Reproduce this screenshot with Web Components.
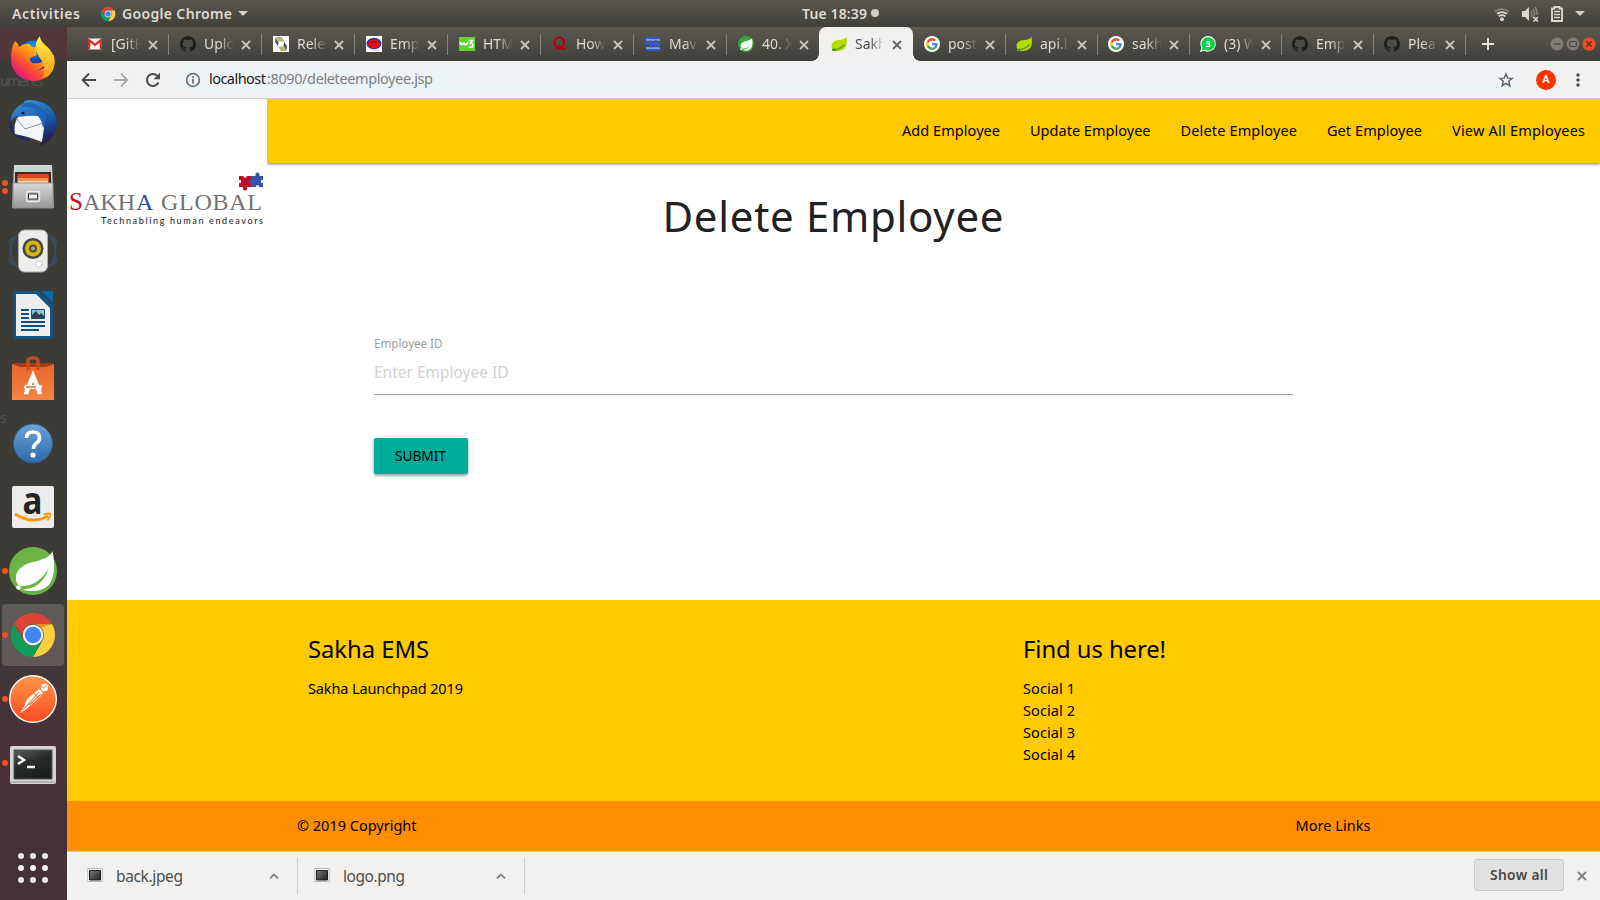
<!DOCTYPE html>
<html lang="en">
<head>
<meta charset="utf-8">
<title>Sakha EMS</title>
<style>
html,body{margin:0;height:100%;overflow:hidden;background:#3c3b36}
body{font-family:"Noto Sans","Open Sans",sans-serif;color:#000}
</style>
</head>
<body>
<desk-top></desk-top>
<script>
const ICONS = {
chrome:['0 0 48 48','<path fill="#db4437" d="M24 13H43.05A22 22 0 0 0 4.95 13L14.5 29.5A11 11 0 0 1 24 13z"/><path fill="#ffcd40" d="M43.05 13H24A11 11 0 0 1 33.5 29.5L24 46A22 22 0 0 0 43.05 13z"/><path fill="#0f9d58" d="M24 46L33.5 29.5A11 11 0 0 1 14.5 29.5L4.95 13A22 22 0 0 0 24 46z"/><path fill="#a52714" opacity=".35" d="M24 13H43l-12 4zM5 13l9.500 16.500L13 22z"/><circle cx="24" cy="24" r="10.300" fill="#f1f1f1"/><circle cx="24" cy="24" r="8.200" fill="#4285f4"/>'],
gmail:['0 0 16 16','<path fill="#f2f2f2" d="M1 2.500h14v11H1z"/><path fill="#d93025" d="M1 3.500Q1 2.500 2 2.500L8 7.500 14 2.500Q15 2.500 15 3.500V13.500H12.800V6.600L8 10.300 3.200 6.600V13.500H1z"/>'],
github:['0 0 16 16','<path fill="#1f1f1e" d="M8 0C3.58 0 0 3.58 0 8c0 3.540 2.290 6.530 5.470 7.590.4.070.55-.17.55-.38 0-.19-.01-.82-.01-1.490-2.010.37-2.530-.49-2.690-.94-.09-.23-.48-.94-.82-1.130-.28-.15-.68-.52-.01-.53.63-.01 1.080.58 1.230.82.72 1.210 1.870.87 2.330.66.070-.52.28-.87.51-1.070-1.780-.2-3.640-.89-3.640-3.950 0-.87.31-1.590.82-2.150-.08-.2-.36-1.020.08-2.120 0 0 .67-.21 2.200.82.64-.18 1.320-.27 2-.27s1.360.09 2 .27c1.530-1.040 2.200-.82 2.200-.82.44 1.100.16 1.920.08 2.120.51.56.82 1.270.82 2.150 0 3.070-1.870 3.750-3.650 3.950.29.25.54.73.54 1.480 0 1.070-.01 1.930-.01 2.200 0 .21.15.46.55.38A8.010 8.010 0 0 0 16 8c0-4.420-3.580-8-8-8z"/>'],
hib:['0 0 16 16','<path fill="#fff" d="M0 0h16v16H0z"/><path fill="#b9ad72" d="M3 1h5.500l3 4.500H5.500zM5 10.500h5.500L13.500 15H8z"/><path fill="#4f5b63" d="M2.500 1.500L5.500 6 5 10.500 2 6zM11 5.500l3 4.500-.5 4.500L10.500 10z"/>'],
red:['0 0 16 16','<path fill="#fff" d="M0 0h16v16H0z"/><ellipse cx="8" cy="7.500" rx="7.500" ry="5.700" fill="#27379a"/><ellipse cx="8" cy="8" rx="6" ry="4.600" fill="#e80d12"/><path d="M5 6.500q3-2 6 .5" stroke="#8b0710" fill="none" stroke-width="1.200"/><path d="M4 14h9" stroke="#c9c9d0"/>'],
w3:['0 0 16 16','<path fill="#62d334" d="M0 1h16v14H0z"/><path d="M1.200 6q.5 2.600 2 2.500T5 6.500Q5.300 8.600 6.800 8.500T9 6M9.500 4.500H13.500L11.500 7.300Q14.200 7.500 14 9.700T9.600 11" fill="none" stroke="#fff" stroke-width="1.700"/>'],
quora:['0 0 16 16','<ellipse cx="7.300" cy="7" rx="4.700" ry="5.500" fill="none" stroke="#b30000" stroke-width="2.200"/><path d="M5.500 10q3-1.200 4.500 1.800t3.500 0" fill="none" stroke="#b30000" stroke-width="1.700"/>'],
mvn:['0 0 16 16','<path fill="#3458d8" d="M1 1h14v3H1zM1 12h14v3H1z"/><path fill="#ddd" d="M1 3.500h14v1H1zM1 11.500h14v1H1z"/><path stroke="#3458d8" stroke-width="1.400" fill="none" d="M1.500 10.500v-5l2 2.500 2-2.500v5M7 5.500v5l3-5v5M11.500 10.500v-5l3 5v-5"/>'],
springc:['0 0 48 48','<circle cx="24" cy="24" r="24" fill="#6bb344"/><path fill="#fff" d="M43.500 4C41 10 36 12 24 15 11 18 6 25 7 33q.6 4 4 6 18 1 29-18Q33 42 13 42.500 30 47 40 38 48 26 43.500 4z"/><circle cx="9.500" cy="40.500" r="2.200" fill="#fff"/>'],
springf:['0 0 48 48','<circle cx="24" cy="24" r="24" fill="#31a836"/><path fill="#fff" d="M42 7Q35 14 22 16 7 20 8 31q1 5 6 7 14 0 25-12-9 13-26 16 15 6 25-4 8-10 4-31z"/><circle cx="10" cy="40" r="3" fill="#fff"/>'],
leaf:['0 0 16 16','<path fill="#b4dc00" d="M15.500 1Q13 4 8 4 1 4.500.5 10q0 3 2 5 10 1 12.500-4.500 1.500-4 .5-9.500z"/><path d="M1 14Q9 14 13.500 8.500" fill="none" stroke="#5d9c1c" stroke-width="1.300"/><path fill="#5d9c1c" d="M1 13l3-1 1 3H1.500z"/>'],
google:['-5 -5 58 58','<circle cx="24" cy="24" r="29" fill="#fff"/><g transform="translate(3 3) scale(.875)"><path fill="#ea4335" d="M24 9.500c3.540 0 6.710 1.220 9.210 3.600l6.850-6.850C35.900 2.380 30.470 0 24 0 14.620 0 6.510 5.380 2.560 13.220l7.980 6.190C12.430 13.720 17.740 9.500 24 9.500z"/><path fill="#4285f4" d="M46.980 24.550c0-1.570-.15-3.090-.38-4.550H24v9.020h12.940c-.58 2.960-2.260 5.480-4.780 7.180l7.730 6c4.510-4.180 7.090-10.360 7.090-17.650z"/><path fill="#fbbc05" d="M10.530 28.590c-.48-1.450-.76-2.990-.76-4.590s.27-3.140.76-4.590l-7.980-6.190C.92 16.460 0 20.120 0 24c0 3.880.92 7.540 2.560 10.780l7.970-6.190z"/><path fill="#34a853" d="M24 48c6.480 0 11.930-2.130 15.890-5.810l-7.730-6c-2.150 1.450-4.920 2.300-8.160 2.300-6.260 0-11.570-4.220-13.470-9.910l-7.980 6.190C6.510 42.620 14.620 48 24 48z"/></g>'],
whats:['0 0 16 16','<path fill="#fff" d="M8.200 0A7.800 7.800 0 1 1 4.500 14.800L0 16 1.300 11.500A7.800 7.800 0 0 1 8.200 0z"/><path fill="#06d044" d="M8.200 1.200A6.700 6.700 0 1 1 4.700 13.600L1.600 14.400 2.500 11.400A6.700 6.700 0 0 1 8.200 1.200z"/><text x="8.200" y="11.300" text-anchor="middle" font-size="9" font-weight="700" fill="#fff">3</text>'],
x:['0 0 10 10','<path d="M1 1l8 8M9 1l-8 8" stroke="currentColor" stroke-width="1.800" fill="none"/>'],
plus:['0 0 12 12','<path d="M6 0v12M0 6h12" stroke="#e8e7e3" stroke-width="1.900"/>'],
min:['0 0 14 14','<circle cx="7" cy="7" r="6.500" fill="#7f7d76"/><path d="M3.500 7h7" stroke="#45443f" stroke-width="1.200"/>'],
max:['0 0 14 14','<circle cx="7" cy="7" r="6.500" fill="#7f7d76"/><path d="M3.700 4.600h6.600v4.800H3.700z" fill="none" stroke="#45443f"/>'],
cls:['0 0 14 14','<circle cx="7" cy="7" r="6.600" fill="#ee5026"/><path d="M4.300 4.300l5.400 5.400M9.700 4.300l-5.400 5.400" stroke="#5c2514" stroke-width="1.300"/>'],
back:['0 0 16 16','<path d="M15 8H2M8 1.500L1.700 8 8 14.500" fill="none" stroke="#4a4a4a" stroke-width="1.900"/>'],
fwd:['0 0 16 16','<path d="M1 8H14M8 1.500L14.300 8 8 14.500" fill="none" stroke="#acacaa" stroke-width="1.900"/>'],
reload:['0 0 16 16','<path d="M13.400 10.500A6 6 0 1 1 12.300 3.900" fill="none" stroke="#4a4a4a" stroke-width="2"/><path fill="#4a4a4a" d="M15 .8v6.400H8.600z"/>'],
info:['0 0 16 16','<circle cx="8" cy="8" r="6.400" fill="none" stroke="#5f6368" stroke-width="1.500"/><path d="M8 7v4.500M8 4.200v1.700" stroke="#5f6368" stroke-width="1.700"/>'],
star:['0 0 16 16','<path d="M8 1.900l1.700 4.200 4.500.3-3.500 2.900 1.200 4.400L8 11.300l-3.900 2.400 1.200-4.400-3.500-2.900 4.500-.3z" fill="none" stroke="#5f6368" stroke-width="1.400"/>'],
dots:['0 0 4 16','<g fill="#4a4a4a"><circle cx="2" cy="3" r="1.700"/><circle cx="2" cy="8" r="1.700"/><circle cx="2" cy="13" r="1.700"/></g>'],
down:['0 0 10 5','<path fill="#d5d2cb" d="M0 0h10L5 5z"/>'],
wifi:['0 0 16 16','<g fill="none" stroke-width="1.800"><path d="M1 5.500Q8 .6 15 5.500" stroke="#85827b"/><path d="M3 7.800Q8 4.300 13 7.800M4.700 10.200Q8 8 11.300 10.200" stroke="#dad7d0"/></g><circle cx="8" cy="13.300" r="2" fill="#dad7d0"/>'],
vol:['0 0 18 16','<path fill="#dad7d0" d="M1 5h3l4-4v14L4 11H1z"/><g fill="none" stroke="#85827b" stroke-width="1.500"><path d="M10 5q1.800 3 0 6M12 3q3 5 0 9M14 1q2.800 4 2 8"/></g><path d="M12.500 11l4.500 4.500M17 11l-4.500 4.500" stroke="#dad7d0" stroke-width="1.600"/>'],
bat:['0 0 12 16','<path d="M1 2.500h2.500V1h5v1.500H11V15H1z" fill="none" stroke="#dad7d0" stroke-width="1.900"/><path d="M3 5.500h6M3 8.500h6M3 11.500h6" stroke="#dad7d0" stroke-width="1.500"/>'],
up:['0 0 10 6','<path d="M1 5.400l4-4 4 4" fill="none" stroke="#807f7d" stroke-width="1.800"/>'],
pic:['0 0 16 16','<path fill="#fff" stroke="#b5b4b2" d="M.8 1.500h14.400v13H.8z"/><defs><linearGradient id="a" x2="1" y2="1"><stop stop-color="#787878"/><stop offset="1" stop-color="#202020"/></linearGradient></defs><path fill="url(#a)" stroke="#1d1d1d" d="M2.500 3.500h11v9.500h-11z"/>'],
firefox:['0 0 48 48','<defs><linearGradient id="a" x1=".85" y1=".1" x2=".2" y2=".9"><stop offset="0" stop-color="#ffe226"/><stop offset=".4" stop-color="#ff9a14"/><stop offset=".7" stop-color="#ff4a32"/><stop offset="1" stop-color="#e31587"/></linearGradient><linearGradient id="c" x2="0" y2="1"><stop stop-color="#fff44f"/><stop offset="1" stop-color="#ff980e"/></linearGradient><radialGradient id="b" cy=".2"><stop stop-color="#0b9dfc"/><stop offset="1" stop-color="#153a9d"/></radialGradient></defs><circle cx="24" cy="22" r="16.500" fill="url(#b)"/><path fill="url(#a)" d="M6 6Q9 8 10 12q5-4 11-3 0 2 3 3l8 1-5 4 1 3-7 3q-1 3 3 5 5 1 8-1 4 0 5 2-5 6-12 7 14-1 15-13L45 20q3 25-21 26Q3 44 2 24q0-12 4-18z"/><path fill="url(#c)" d="M31 1q0 4 4 8 13 10 10 23-3 10-12 11 5-8 0-17Q25 16 27 8q1-4 4-7z"/>'],
tbird:['0 0 48 48','<defs><linearGradient id="a" x2=".4" y2="1"><stop stop-color="#3c9be2"/><stop offset=".6" stop-color="#1b5bab"/><stop offset="1" stop-color="#252157"/></linearGradient></defs><path fill="#252666" d="M1 16Q-2 32 8 38q6 4 14 4L3 27z"/><path fill="url(#a)" d="M1 22Q3 9 15 4q-1-3 6-3 24 1 27 22 0 17-18 24 3-4 4-7L20 30 8 17z"/><path fill="#f3f5f8" d="M9 18q14-2 20-1 6 7 6 12l-2 14-14-5-13-3q-2-9 3-17z"/><path d="M7 19l9 11 18-6" fill="none" stroke="#8f959d"/><path fill="#1f66b8" d="M12 8q13-2 18 9 3 5 4 12 5-9 1-17-8-10-19-8z"/><circle cx="14" cy="14" r="1.600" fill="#113"/>'],
files:['0 0 48 48','<defs><linearGradient id="a" x2="0" y2="1"><stop stop-color="#d8d8d6"/><stop offset="1" stop-color="#979797"/></linearGradient></defs><path fill="url(#a)" d="M5 2h38l2 43H3z"/><path fill="#30302d" d="M6 9h36v13H6z"/><path fill="#dd4814" d="M8 13q0-2 2-2h28q2 0 2 2v8H8z"/><path fill="#ee9454" d="M9 15h30v6H9z"/><path fill="#f6d9b5" d="M9 18h30v2H9z"/><path fill="url(#a)" stroke="#929290" d="M4 20h40v25H4z"/><rect x="17.500" y="28.500" width="13" height="10" rx="1.500" fill="#b7b7b5" stroke="#e8e8e8" stroke-width="1.500"/><path d="M19.500 31h9v5h-9z" fill="#f4f4f4" stroke="#333"/>'],
rhythm:['0 0 48 48','<g fill="none" stroke="#38536d"><path d="M8 8Q-5 24 8 40M4 10Q-7 24 4 38M40 8Q53 24 40 40M44 10Q55 24 44 38" stroke-width="1.500"/></g><rect x="9.500" y="3" width="29" height="42" rx="6" fill="#ececea" stroke="#aaa"/><circle cx="24" cy="21.500" r="10.500" fill="#444"/><circle cx="24" cy="21.500" r="8" fill="#d7b519"/><circle cx="24" cy="21.500" r="4" fill="#55502b"/><circle cx="24" cy="21.500" r="2" fill="#aaa78d"/><circle cx="30" cy="37" r="3.200" fill="#fff" stroke="#ccc"/>'],
writer:['0 0 48 48','<path fill="#125284" d="M6 0h24l14 14v31q0 3-3 3H7q-3 0-3-3V2q0-2 2-2z"/><path fill="#eee" d="M7 3h20l14 14v28H7z"/><path fill="#0d68a8" d="M32 0h12v12z"/><path stroke="#10517f" stroke-width="2" d="M12 19h8M12 23h8M12 27h8M12 31h24M12 35h24M12 39h18"/><path fill="#81c5ee" stroke="#10517f" d="M22.500 18.500h13v9h-13z"/><path fill="#333d44" d="M23 27v-3l4-4 3 4 2-2 3 3v2z"/><circle cx="33.500" cy="20.500" r="1.500" fill="#e4c34b"/>'],
soft:['0 0 48 48','<defs><linearGradient id="a" x2="0" y2="1"><stop stop-color="#e9662a"/><stop offset="1" stop-color="#f48447"/></linearGradient></defs><path d="M4 8h40v6H4z" fill="#a63c18"/><path fill="url(#a)" d="M3 9l8 3h26l8-3v36H3z"/><path d="M19 15V6q0-3 5-3t5 3v9" fill="none" stroke="#c64b1c" stroke-width="3.500"/><path d="M17.500 37L24 21l6.500 16" fill="none" stroke="#fff" stroke-width="4.500"/><path d="M15 38h4.500M28.500 38H33" stroke="#fff" stroke-width="2.500"/><rect x="15" y="30" width="18" height="4" rx="1.500" fill="#fff"/><path d="M17 32h10" stroke="#e9662a" stroke-width="1.500"/>'],
help:['0 0 48 48','<defs><linearGradient id="a" x2="0" y2="1"><stop stop-color="#6ba3d8"/><stop offset="1" stop-color="#2c6aa7"/></linearGradient></defs><circle cx="24" cy="24.500" r="19.500" fill="url(#a)" stroke="#2d5f92"/><path d="M17.500 19q0-6 6.500-6t6.500 6q0 3-3 5t-3 6" fill="none" stroke="#fff" stroke-width="3.600"/><circle cx="24" cy="36" r="2.600" fill="#fff"/>'],
amazon:['0 0 48 48','<rect x="3" y="3" width="42" height="42" rx="2" fill="#ececec"/><text x="23.500" y="30.500" text-anchor="middle" font-family="Open Sans" font-weight="700" font-size="38" textLength="20" lengthAdjust="spacingAndGlyphs" fill="#262626">a</text><path d="M6 31q17 11 33 2" fill="none" stroke="#f90" stroke-width="2.700"/><path d="M34.500 31.500q7-2 7 0t-3 6" fill="none" stroke="#f90" stroke-width="1.800"/>'],
postman:['0 0 48 48','<defs><linearGradient id="a" x2="0" y2="1"><stop stop-color="#ff9545"/><stop offset="1" stop-color="#fd4b23"/></linearGradient></defs><circle cx="24" cy="24" r="23.300" fill="url(#a)" stroke="#fff" stroke-width="1.400"/><circle cx="35.500" cy="12.500" r="3.700" fill="#fff"/><path d="M31.500 11l3 2 4-3" stroke="#ff8a41" fill="none"/><path fill="#fff" d="M30 14l4 4-3 4-9 8-6 5-5 3 4-6 3-8z"/><path d="M30 17L14 35M32 19L20 30M24 17l6 7" stroke="#ff713a" stroke-width="1.100"/>'],
term:['0 0 48 48','<defs><linearGradient id="a" x2=".5" y2="1"><stop stop-color="#575d5c"/><stop offset=".5" stop-color="#292c2c"/><stop offset="1" stop-color="#1d1f1f"/></linearGradient></defs><rect x="1" y="7" width="46" height="38" rx="2" fill="#d4d4d2"/><path d="M2 43h44" stroke="#90908e"/><path fill="url(#a)" stroke="#555" d="M5 11h38v29H5z"/><path d="M9 17l6 4-6 4M18 28h8" fill="none" stroke="#f4f4f4" stroke-width="2.500"/>'],
puzzle:['0 0 26 20','<path fill="#c60c22" d="M1 4h4.500v1.500h3V4H13v11H9v1q.8 2.500-2 2.500T5 16v-1H1v-4h2V8H1z"/><path fill="#3553a8" d="M13 4h4.500V3q-.6-2.500 2-2.500T21.500 3v1H25v4h-2v3h2v4h-4v-1.500h-3V15h-5v-3.500q-2.500.6-2.500-2T13 7.500z"/>']
};
const FONT = '"Noto Sans","Open Sans",sans-serif';
function define(name, css, html, extra){
  customElements.define(name, class extends HTMLElement{
    constructor(){ super(); this.attachShadow({mode:'open'}); }
    connectedCallback(){
      this.shadowRoot.innerHTML = '<style>*{box-sizing:border-box}'+css+'</style>'+(typeof html==='function'?html(this):html);
      if(extra) extra(this);
    }
  });
}
/* Named SVG icon: <i-con name size="w[xh]"> */
define('i-con',':host{display:block;flex:none}svg{display:block}',el=>{
  const [w,h=w]=(el.getAttribute('size')||'16').split('x'), [vb,body]=ICONS[el.getAttribute('name')];
  return `<svg width="${w}" height="${h}" viewBox="${vb}" font-family='${FONT}'>${body}</svg>`;
});
/* Text run spaced to a set measure: <fit-text w="px" text> */
define('fit-text',':host{display:block;flex:none;white-space:pre}span{display:inline-block}',
  el=>`<span>${el.getAttribute('text')}</span>`,
  el=>{
    const w=+el.getAttribute('w'), s=el.shadowRoot.querySelector('span'), n=s.textContent.length;
    el.style.width=w+'px';
    if(n>1) s.style.letterSpacing=((w-s.getBoundingClientRect().width)/(n-1)).toFixed(3)+'px';
  });

define('top-bar',`:host{display:grid;grid-template-columns:802px 78px 1fr;height:27px;background:linear-gradient(#59564f,#403f3a);color:#dfdbd2;font-weight:600;font-size:14px;line-height:26px}
div{display:flex;align-items:center}.l{padding-left:12px}.r{justify-content:flex-end;padding-right:15px}
.app{margin:0 6px 0 20px}.c1{margin-left:6px}.dot{flex:none;width:8px;height:8px;border-radius:50%;background:#d0cdc6;margin:0 0 1px 4px}`,
`<div class="l"><fit-text w="68" text="Activities"></fit-text><i-con class="app" name="chrome" size="16"></i-con><fit-text w="110" text="Google Chrome"></fit-text><i-con class="c1" name="down" size="10x5"></i-con></div>
<div><fit-text w="65" text="Tue 18:39"></fit-text><span class="dot"></span></div>
<div class="r"><i-con name="wifi" size="16"></i-con><i-con name="vol" size="18x16" style="margin-left:11px"></i-con><i-con name="bat" size="12x16" style="margin-left:12px"></i-con><i-con name="down" size="10x5" style="margin-left:12px"></i-con></div>`);

define('dock-item',`:host{display:flex;align-items:center;position:relative;width:67px;height:48px;padding-left:9px}
:host([active])::before{content:"";position:absolute;left:2px;top:-7px;width:62px;height:62px;border-radius:4px;background:rgba(255,255,255,.17)}
i-con{position:relative}.p{position:absolute;left:2px;top:0;height:48px;display:flex;flex-direction:column;justify-content:center;gap:2px}.p b{width:6px;height:6px;border-radius:50%;background:#e95420}`,
el=>`<i-con name="${el.getAttribute('icon')}" size="48"></i-con><div class="p">${'<b></b>'.repeat(+el.getAttribute('dots')||0)}</div>`);
define('side-dock',`:host{display:flex;flex-direction:column;gap:16px;position:relative;width:67px;padding-top:8px;background:linear-gradient(#50373a 0,#50373a 32px,#3c3b36 33px,#3c3b36 570px,#47333a 700px,#423136 100%)}
.g{position:absolute;left:0;color:#55544e;font-size:14px;line-height:20px}
.apps{display:grid;grid-template-columns:repeat(3,6px);gap:6px;margin:50px 0 0 18px}.apps b{width:6px;height:6px;border-radius:50%;background:#f0efed}`,
`<fit-text class="g" style="top:44px" w="43" text="uments"></fit-text><fit-text class="g" style="top:381px" w="8" text="s"></fit-text>`+
['firefox','tbird','files:2','rhythm','writer','soft','help','amazon','springc:1','chrome:1:active','postman:1','term:1'].map(s=>{const[i,d,a]=s.split(':');return `<dock-item icon="${i}" dots="${d||0}" ${a||''}></dock-item>`}).join('')+
`<div class="apps">${'<b></b>'.repeat(9)}</div>`);

define('browser-tab',`:host{display:flex;align-items:center;position:relative;width:93px;height:34px;padding-left:11px;color:#dddbd5;font-size:14px;flex:none}
:host::after{content:"";position:absolute;right:0;top:7px;width:1px;height:21px;background:#85847c}
:host([late]){width:92px;padding-left:10px}
:host([active]){width:94px;margin-left:-1px;padding-left:12px;background:#f2f1f0;color:#4c4b49;border-radius:7px 7px 0 0}
:host([nosep])::after,:host([active])::after{display:none}
:host([active])::before{content:"";position:absolute;left:-7px;right:-7px;bottom:0;height:7px;background:radial-gradient(circle at 0 0,transparent 6.500px,#f2f1f0 7px) left/7px 7px no-repeat,radial-gradient(circle at 100% 0,transparent 6.500px,#f2f1f0 7px) right/7px 7px no-repeat}
.t{width:30px;margin:0 7px 0 8px;overflow:hidden;white-space:pre;line-height:20px;-webkit-mask:linear-gradient(90deg,#000 50%,transparent)}
i-con.x{margin-top:1px;opacity:.85}`,
el=>`<i-con name="${el.getAttribute('icon')}" size="16"></i-con><span class="t">${el.getAttribute('label')}</span><i-con class="x" name="x" size="10"></i-con>`);
define('tab-strip',`:host{display:flex;align-items:center;height:34px;padding-left:9px;background:linear-gradient(#5b5951,#403f3a)}
.w{display:flex;gap:2px;margin-left:auto;padding-right:4px}.plus{margin-left:16px}
browser-tab[active]+browser-tab{margin-left:1px}`,
[['gmail','[GitH'],['github','Uplo'],['hib','Rele'],['red','Emp'],['w3','HTM'],['quora','How'],['mvn','Mav'],['springf','40. X','nosep'],['leaf','Sakh','active'],['google','post','late'],['leaf','api.l','late'],['google','sakh','late'],['whats','(3) W','late'],['github','Emp','late'],['github','Plea','late']].map(([i,l,a])=>`<browser-tab icon="${i}" label="${l}" ${a||''}></browser-tab>`).join('')+
`<i-con class="plus" name="plus" size="12"></i-con><div class="w"><i-con name="min" size="14"></i-con><i-con name="max" size="14"></i-con><i-con name="cls" size="14"></i-con></div>`);

define('address-bar',`:host{display:flex;align-items:center;height:38px;padding:0 20px 0 14px;background:#f2f1f0;border-bottom:1px solid #cbcac9;font-size:14.500px}
.n{display:flex;gap:16px}.u{display:flex;align-items:center;flex:1;height:29px;margin:0 13px 0 14px;padding:0 9px 0 10px;background:#eef3f5;border-radius:15px;line-height:28px}
.u fit-text{margin-top:-3px}.u i-con:last-child{margin-left:auto}.a{width:20px;height:20px;border-radius:50%;background:#ff3300;color:#fff;font:600 11px/20px Roboto,sans-serif;text-align:center;margin-right:20px}`,
`<div class="n"><i-con name="back"></i-con><i-con name="fwd"></i-con><i-con name="reload"></i-con></div>
<div class="u"><i-con name="info"></i-con><fit-text style="margin-left:8px;color:#222" w="57" text="localhost"></fit-text><fit-text style="color:#7d8083;margin-left:1px" w="166" text=":8090/deleteemployee.jsp"></fit-text><i-con name="star"></i-con></div>
<span class="a">A</span><i-con name="dots" size="4x16"></i-con>`);

define('site-logo',`:host{display:flex;flex-direction:column;position:relative;width:200px;height:130px;padding:73px 4px 0 2px;background:#fff}
.n{display:flex;align-items:flex-end;height:26px;margin-top:-3px;font-family:"Liberation Serif",serif;font-size:24px;line-height:26px;color:#737375}
.pz{margin-left:169px}.t{margin:0 0 0 32px;font:9px/12px Lato,sans-serif;color:#2d2d2d;font-weight:500}`,
`<i-con class="pz" name="puzzle" size="26x20"></i-con>
<div class="n"><fit-text w="13" text="S" style="color:#c60c22;font-size:25px;margin-right:1px"></fit-text><fit-text w="52" text="AKH" style="margin-right:1px"></fit-text><fit-text w="17" text="A" style="color:#2b4ba3;margin-right:8px"></fit-text><fit-text w="101" text="GLOBAL"></fit-text></div>
<fit-text class="t" w="162" text="Technabling human endeavors"></fit-text>`);
define('nav-bar',`:host{display:flex;justify-content:flex-end;gap:30px;flex:1;height:64px;padding-right:15px;background:#ffca00;line-height:63px;font-size:14.500px;box-shadow:0 1px 3px rgba(0,0,0,.55)}`,
[['Add Employee',98],['Update Employee',120.5],['Delete Employee',116.5],['Get Employee',95],['View All Employees',133]].map(([t,w])=>`<fit-text w="${w}" text="${t}"></fit-text>`).join(''));
define('employee-form',`:host{display:flex;flex-direction:column;width:919px;margin:0 auto}
.h{align-self:center;font-size:42px;line-height:60px;color:#212121;margin:-43px 0 0 -1px}
.l{font-size:11.700px;line-height:16px;color:#9e9e9e;margin-top:89px}.i{display:flex;align-items:center;height:44px;padding-bottom:1px;border-bottom:1px solid #9e9e9e;color:#d1d1d1;font-size:15.500px}
.b{align-self:flex-start;width:94px;height:36px;margin-top:43px;padding-left:21px;border-radius:2px;background:#02ac9b;font-size:13.800px;line-height:36px;box-shadow:0 2px 2px rgba(0,0,0,.2),0 1px 4px rgba(0,0,0,.25)}`,
`<fit-text class="h" w="341" text="Delete Employee"></fit-text>
<fit-text class="l" w="68.5" text="Employee ID"></fit-text>
<div class="i"><fit-text w="134.5" text="Enter Employee ID"></fit-text></div>
<div class="b"><fit-text w="51" text="SUBMIT"></fit-text></div>`);
define('page-footer',`:host{display:block;font-size:14.500px;line-height:22px}
.m{display:flex;height:201px;background:#ffca00;padding:34px 0 0 241px}.m>div{width:715px}.m>div:last-child{width:auto}
.t{font-size:23.800px;line-height:30px;margin-bottom:13px}
.c{display:flex;justify-content:space-between;height:50px;padding:0 229.500px 0 230px;background:#ff8f00;line-height:48px}`,
`<div class="m"><div><fit-text class="t" w="121" text="Sakha EMS"></fit-text><fit-text w="155" text="Sakha Launchpad 2019"></fit-text></div>
<div><fit-text class="t" w="143" text="Find us here!"></fit-text>${[1,2,3,4].map(n=>`<fit-text w="52" text="Social ${n}"></fit-text>`).join('')}</div></div>
<div class="c"><fit-text w="119.5" text="© 2019 Copyright"></fit-text><fit-text w="75" text="More Links"></fit-text></div>`);
define('download-item',`:host{display:flex;align-items:center;height:36px;border-right:1px solid #cfcecc;color:#4e4d4b;font-size:15.500px;line-height:34px}
.p{margin:0 13px 3px 0}.u{margin:0 18px 0 auto}`,
el=>`<i-con class="p" name="pic" size="16"></i-con><fit-text w="${el.getAttribute('w')}" text="${el.getAttribute('file')}"></fit-text><i-con class="u" name="up" size="10x6"></i-con>`);
define('download-bar',`:host{display:flex;align-items:center;height:49px;background:#f2f1f0;border-top:1px solid #cbcac9;padding:0 13px 0 20px}
.s{margin:0 13px 2px auto;width:90px;height:32px;padding-left:15px;border:1px solid #c9c8c6;border-radius:3px;background:#e3e2e0;color:#4a4947;font-size:13.800px;font-weight:600;line-height:30px}`,
`<download-item style="width:211px" file="back.jpeg" w="67"></download-item><download-item style="width:211px;margin-left:16px" file="logo.png" w="62"></download-item>
<div class="s"><fit-text w="58" text="Show all"></fit-text></div><i-con name="x" size="10" style="color:#807f7d;margin-bottom:1px"></i-con>`);
define('web-page',`:host{display:flex;flex-direction:column;flex:1;background:#fff;overflow:hidden}.t{display:flex;align-items:flex-start}main{flex:1}`,
`<div class="t"><site-logo></site-logo><nav-bar></nav-bar></div><main><employee-form></employee-form></main><page-footer></page-footer>`);
define('desk-top',`:host{display:flex;flex-direction:column;width:1600px;height:900px;overflow:hidden}
.r{display:flex;flex:1;min-height:0}.b{display:flex;flex-direction:column;flex:1;min-width:0}`,
`<top-bar></top-bar><div class="r"><side-dock></side-dock><div class="b"><tab-strip></tab-strip><address-bar></address-bar><web-page></web-page><download-bar></download-bar></div></div>`);
</script>
</body>
</html>
